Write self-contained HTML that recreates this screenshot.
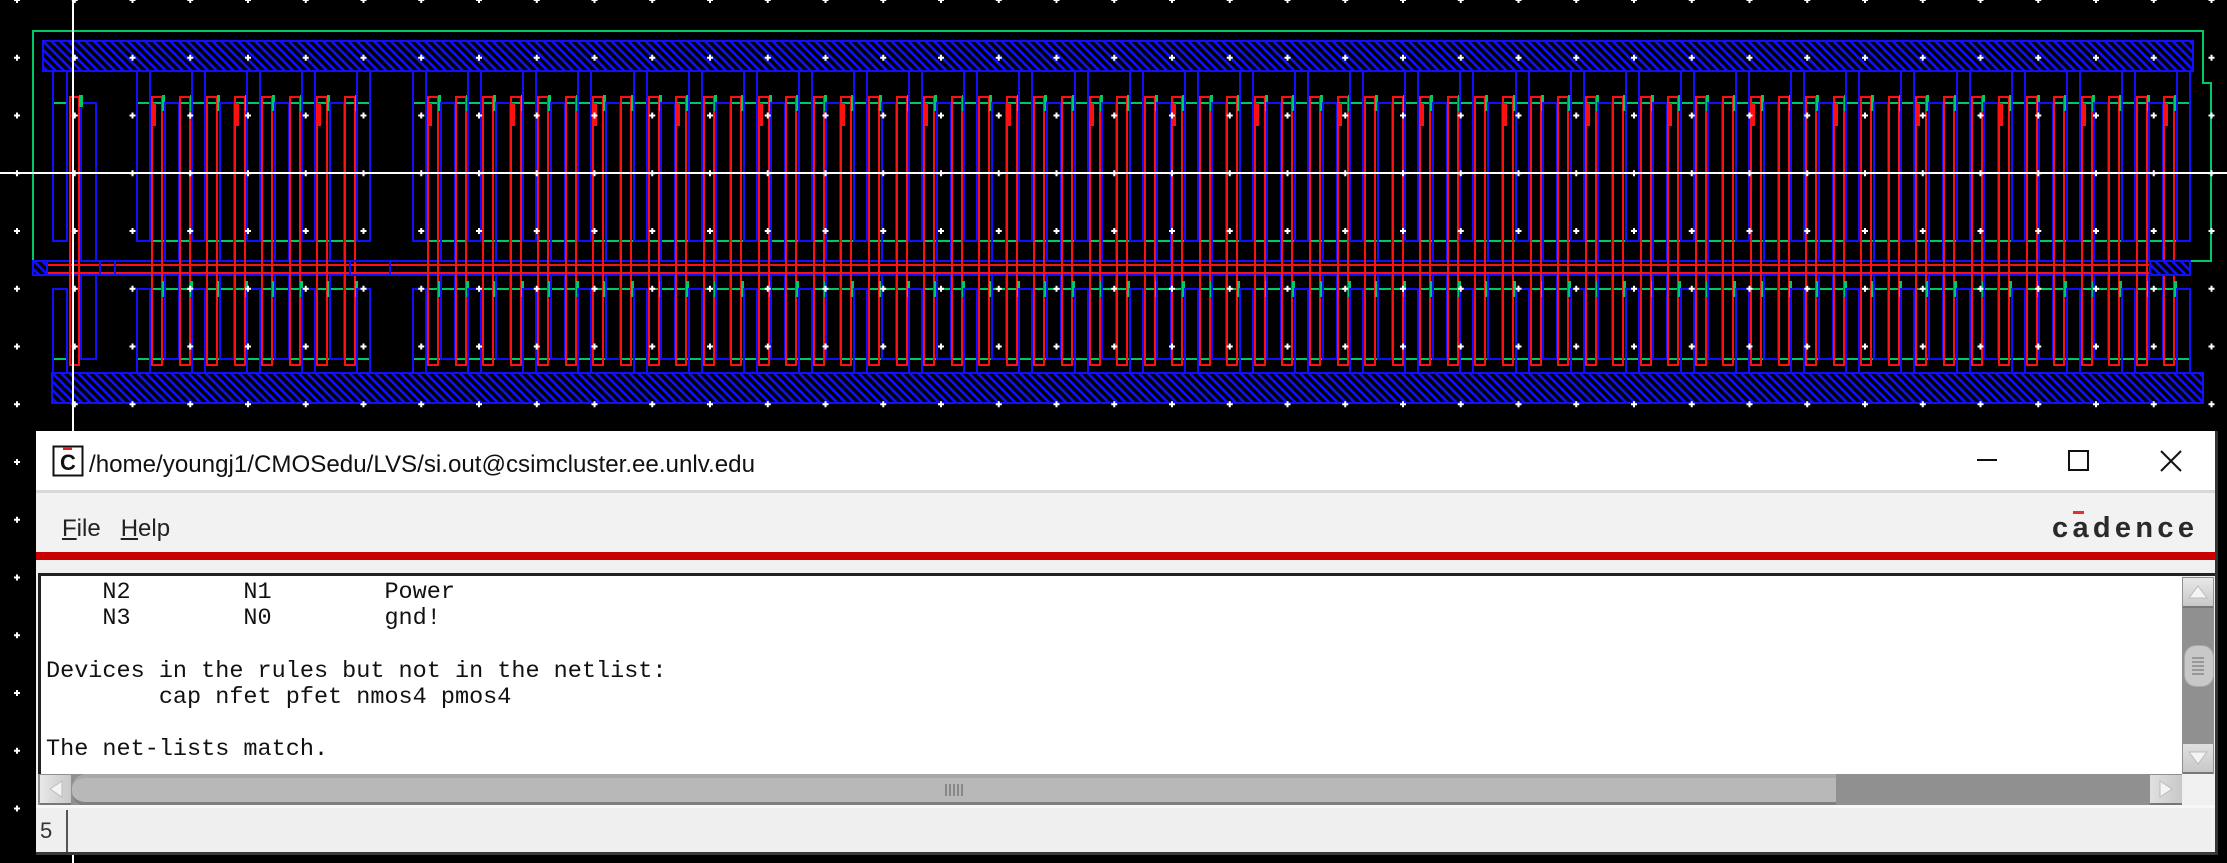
<!DOCTYPE html>
<html><head><meta charset="utf-8">
<style>
html,body{margin:0;padding:0;background:#000;width:2227px;height:863px;overflow:hidden;position:relative}
#lay{position:absolute;left:0;top:0}
.win{position:absolute;left:36px;top:431px;width:2182px;height:424px;background:#f0f0f0}
.abs{position:absolute}
.mono{font-family:"Liberation Mono","DejaVu Sans Mono",monospace;font-size:23.5px;color:#111;white-space:pre;line-height:26.2px}
</style></head><body>
<svg id="lay" width="2227" height="863" xmlns="http://www.w3.org/2000/svg"></svg>

<div class="win">
  <div class="abs" style="left:0;top:0;width:2182px;height:61px;background:#fff"></div>
  <div class="abs" style="left:0;top:59px;width:2182px;height:3px;background:#d8d8d8"></div>
  <svg class="abs" style="left:0;top:0" width="2182" height="61">
    <rect x="17.5" y="15.5" width="29" height="29" fill="#fff" stroke="#111" stroke-width="2"/>
    <rect x="27" y="16" width="9" height="3" fill="#e02020"/>
    <text x="24" y="39" font-family="Liberation Sans,sans-serif" font-weight="bold" font-size="22" fill="#111">C</text>
    <text x="53" y="41" font-family="Liberation Sans,sans-serif" font-size="24" fill="#111" textLength="666" lengthAdjust="spacingAndGlyphs">/home/youngj1/CMOSedu/LVS/si.out@csimcluster.ee.unlv.edu</text>
    <line x1="1941" y1="29" x2="1961" y2="29" stroke="#111" stroke-width="2"/>
    <rect x="2033" y="20" width="19" height="19" fill="none" stroke="#111" stroke-width="2"/>
    <path d="M2125 20 L2145 40 M2145 20 L2125 40" stroke="#111" stroke-width="2"/>
  </svg>
  <div class="abs" style="left:0;top:62px;width:2182px;height:59px;background:#f2f2f2"></div>
  <div class="abs" style="left:26px;top:86px;font-family:'Liberation Sans',sans-serif;font-size:24px;color:#222;line-height:24px"><span style="text-decoration:underline">F</span>ile&nbsp;&nbsp;&nbsp;<span style="text-decoration:underline">H</span>elp</div>
  <svg class="abs" style="left:0;top:62px" width="2182" height="60">
    <text x="2016" y="44" font-family="Liberation Sans,sans-serif" font-weight="bold" font-size="29" fill="#2a2a2a" textLength="142" lengthAdjust="spacing">cadence</text>
    <rect x="2037" y="18" width="11" height="3" fill="#e03030"/>
  </svg>
  <div class="abs" style="left:0;top:121px;width:2182px;height:8px;background:#c80000"></div>
  <div class="abs" style="left:2px;top:142px;width:2178px;height:3px;background:#222"></div>
  <div class="abs" style="left:2px;top:142px;width:3px;height:236px;background:#222"></div>
  <div class="abs" style="left:5px;top:145px;width:2141px;height:198px;background:#fff"></div>
  <div class="abs mono" style="left:10px;top:149px">    N2        N1        Power
    N3        N0        gnd!

Devices in the rules but not in the netlist:
        cap nfet pfet nmos4 pmos4

The net-lists match.</div>
  <div class="abs" style="left:2146px;top:146px;width:32px;height:197px;background:#909090"></div>
  <div class="abs" style="left:2147px;top:147px;width:30px;height:28px;background:linear-gradient(#e8e8e8,#c8c8c8);border-bottom:2px solid #777"></div>
  <svg class="abs" style="left:2147px;top:147px" width="30" height="28"><path d="M6 20 L15 8 L24 20 Z" fill="#f4f4f4" stroke="#bbb"/></svg>
  <div class="abs" style="left:2148px;top:214px;width:28px;height:40px;border-radius:12px;background:#c8c8c8;border:1px solid #a8a8a8"></div>
  <svg class="abs" style="left:2148px;top:214px" width="28" height="40"><path d="M8 13H20M8 17H20M8 21H20M8 25H20M8 29H20" stroke="#888" stroke-width="1.5"/></svg>
  <div class="abs" style="left:2147px;top:313px;width:30px;height:28px;background:linear-gradient(#e0e0e0,#c8c8c8);border-bottom:2px solid #777"></div>
  <svg class="abs" style="left:2147px;top:313px" width="30" height="28"><path d="M6 8 L15 20 L24 8 Z" fill="#f4f4f4" stroke="#bbb"/></svg>
  <div class="abs" style="left:2px;top:343px;width:2144px;height:32px;background:#909090"></div>
  <div class="abs" style="left:2146px;top:343px;width:36px;height:32px;background:#f0f0f0"></div>
  <div class="abs" style="left:4px;top:344px;width:31px;height:28px;background:linear-gradient(90deg,#e8e8e8,#c8c8c8);border-bottom:2px solid #777"></div>
  <svg class="abs" style="left:4px;top:344px" width="31" height="28"><path d="M22 6 L10 14 L22 22 Z" fill="#f4f4f4" stroke="#bbb"/></svg>
  <div class="abs" style="left:36px;top:343px;width:1764px;height:24px;border-radius:14px 0 0 14px;background:#b8b8b8;border-top:4px solid #a8a8a8;border-bottom:4px solid #808080"></div>
  <svg class="abs" style="left:908px;top:353px" width="20" height="14"><path d="M2 0V12M6 0V12M10 0V12M14 0V12M18 0V12" stroke="#888" stroke-width="2"/></svg>
  <div class="abs" style="left:2114px;top:344px;width:32px;height:28px;background:linear-gradient(90deg,#e0e0e0,#c8c8c8);border-bottom:2px solid #777"></div>
  <svg class="abs" style="left:2114px;top:344px" width="32" height="28"><path d="M10 6 L22 14 L10 22 Z" fill="#f4f4f4" stroke="#bbb"/></svg>
  <div class="abs" style="left:0;top:374px;width:2182px;height:3px;background:#f8f8f8"></div>
  <div class="abs" style="left:0;top:377px;width:2182px;height:44px;background:#efefef"></div>
  <div class="abs" style="left:4px;top:387px;font-family:'Liberation Sans',sans-serif;font-size:22px;color:#333">5</div>
  <div class="abs" style="left:30px;top:379px;width:2px;height:42px;background:#555"></div>
  <div class="abs" style="left:0;top:421px;width:2182px;height:3px;background:#3a3a3a"></div>
  <div class="abs" style="left:2179px;top:0;width:3px;height:424px;background:#333"></div>
</div>

<script>
(function(){
var s=[];
var B='#1010ff',R='#ff1010',G='#00c864';
s.push('<defs><pattern id="h" patternUnits="userSpaceOnUse" width="6" height="6" patternTransform="rotate(-45)"><rect width="6" height="6" fill="#000"/><rect width="2.6" height="6" fill="'+B+'"/></pattern></defs>');
function rect(x1,y1,x2,y2,c,f){s.push('<rect x="'+x1+'" y="'+y1+'" width="'+(x2-x1)+'" height="'+(y2-y1)+'" fill="'+(f||'none')+'" stroke="'+c+'" stroke-width="2"/>');}
function line(x1,y1,x2,y2,c,w){s.push('<line x1="'+x1+'" y1="'+y1+'" x2="'+x2+'" y2="'+y2+'" stroke="'+c+'" stroke-width="'+(w||2)+'"/>');}
s.push('<path d="M33 31H2203V83H2211V261H33Z" fill="none" stroke="'+G+'" stroke-width="2"/>');
var groups=[[53,53,2],[137,357,8],[413,2177,64]];
groups.forEach(function(g){
  var a=g[0],b=g[1];
  [103,241,261,275,289,359,373].forEach(function(y){line(a,y,b+14,y,G,2);});
});
line(40,265,2150,265,R,2);line(40,273,2150,273,R,2);
line(33,261,2190,261,B,2);line(40,275,2190,275,B,2);
groups.forEach(function(g){
  var a=g[0],b=g[1],n=g[2];
  if(n==2){
    rect(53,71,67,241,B);rect(53,289,67,373,B);
    rect(70,97,79,365,R);
    rect(81,103,96,261,B);rect(81,275,96,359,B);
    s.push('<rect x="79" y="95" width="4" height="12" fill="'+G+'"/>');
    return;
  }
  var st=(b-a)/n;
  for(var i=0;i<=n;i++){
    var x=Math.round(a+i*st);
    if(i%2==0){rect(x,71,x+13,241,B);rect(x,289,x+13,373,B);}
    else{rect(x,103,x+14,261,B);rect(x,275,x+14,359,B);}
    if(i<n){
      var r=Math.round(x+15);
      rect(r,97,r+10,365,R);
      s.push('<rect x="'+(r+10)+'" y="95" width="3" height="16" fill="'+G+'"/>');
      s.push('<rect x="'+(r+10)+'" y="281" width="3" height="16" fill="'+G+'"/>');
      if(i%3==0)s.push('<rect x="'+(r+1)+'" y="103" width="3" height="23" fill="'+R+'"/>');
    }
  }
});
rect(33,261,47,275,B,'url(#h)');
rect(2150,261,2190,275,B,'url(#h)');
rect(100,261,115,275,B);rect(350,261,390,275,B);
rect(43,41,2193,71,B,'url(#h)');
rect(52,373,2203,403,B,'url(#h)');
line(0,173,2227,173,'#fff',2);
line(73,0,73,863,'#fff',2);
for(var j=0;j<=15;j++){for(var k=0;k<=38;k++){
  var x=17+k*57.75,y=j*57.75;
  s.push('<path d="M'+(x-3)+' '+y+'H'+(x+3)+'M'+x+' '+(y-3)+'V'+(y+3)+'" stroke="#fff" stroke-width="2"/>');
}}
document.getElementById('lay').innerHTML=s.join('');
})();
</script>
</body></html>
